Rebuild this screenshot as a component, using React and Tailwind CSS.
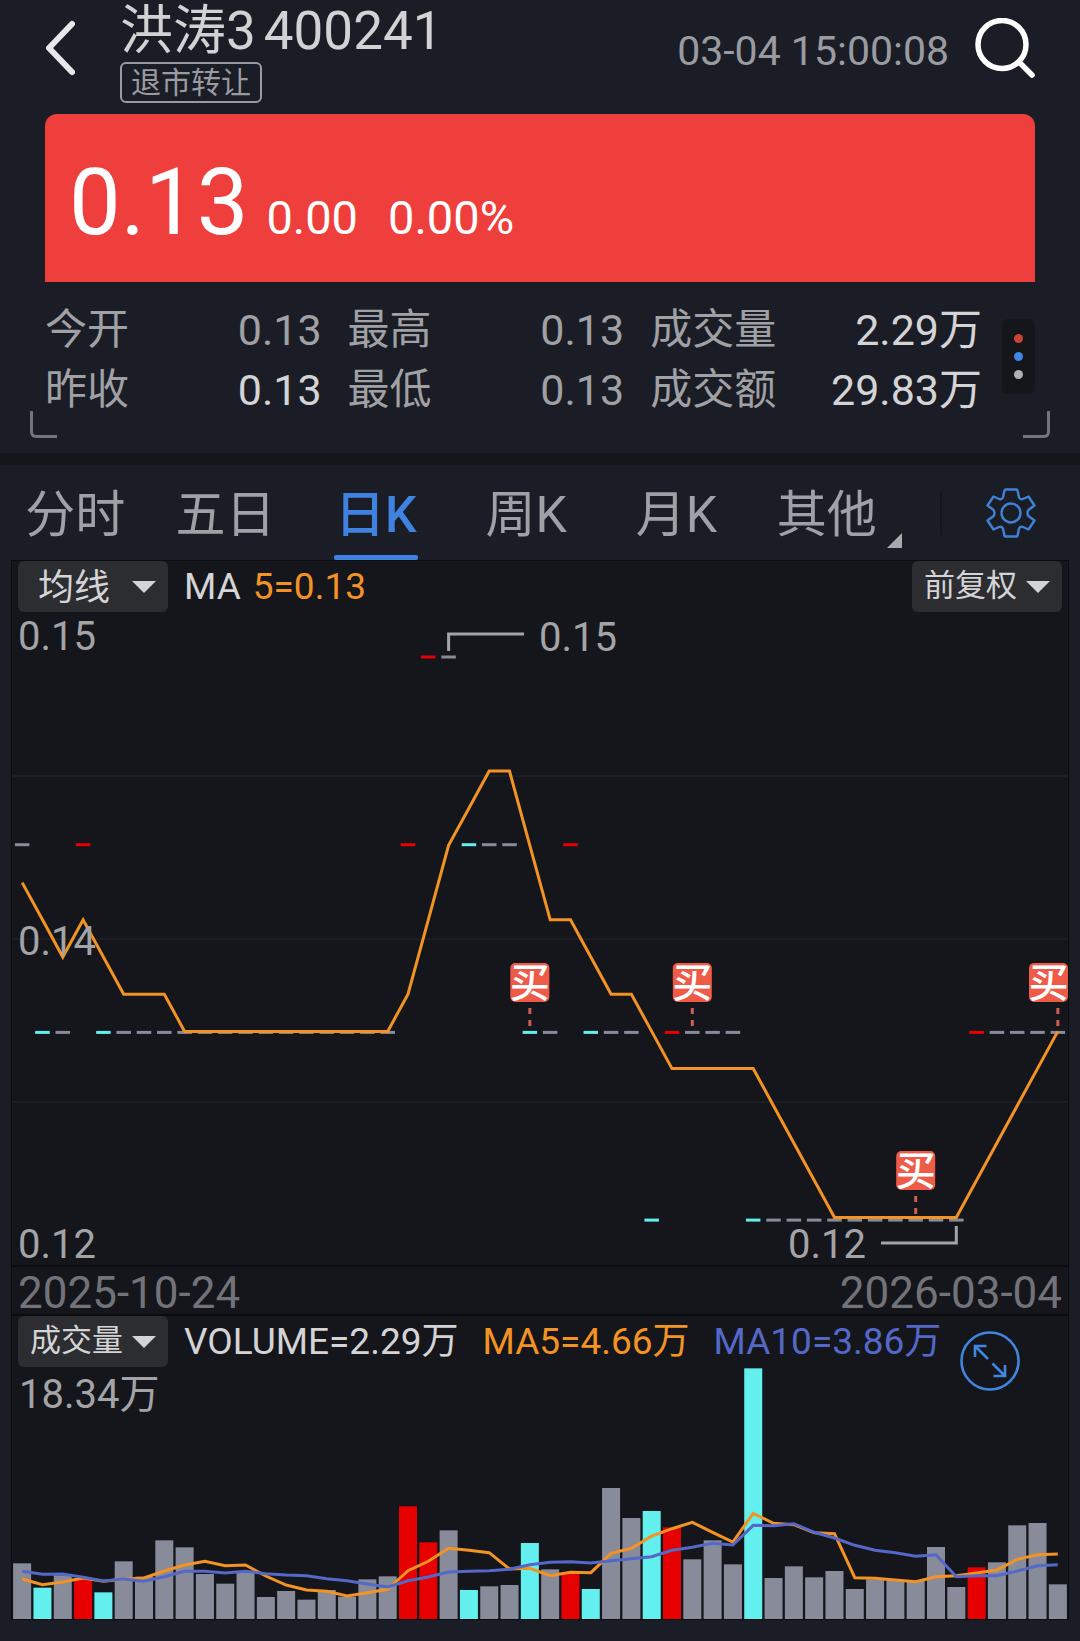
import React from 'react';

const TABS = ['分时', '五日', '日K', '周K', '月K', '其他'];

const STATS = [
    [
        { label: '今开', value: '0.13', color: 'text-[#a0a1a5]' },
        { label: '昨收', value: '0.13', color: 'text-[#d4d4d6]' },
    ],
    [
        { label: '最高', value: '0.13', color: 'text-[#a0a1a5]' },
        { label: '最低', value: '0.13', color: 'text-[#a0a1a5]' },
    ],
    [
        { label: '成交量', value: '2.29万', color: 'text-[#d4d4d6]' },
        { label: '成交额', value: '29.83万', color: 'text-[#d4d4d6]' },
    ],
];

const COLORS = { up: '#e60000', down: '#62efee', flat: '#888b99' };
const UP_DAYS = [3, 19, 20, 27, 32, 47];
const DOWN_DAYS = [1, 4, 22, 25, 28, 31, 36];

// closing prices in 1/100, the first four only feed the moving average
const PREVIOUS = [14, 14, 13, 14];
const CLOSES = [
    14, 13, 13, 14, 13, 13, 13, 13, 13, 13, 13, 13, 13, 13, 13, 13, 13, 13, 13, 14, 15, 15, 14, 14, 14, 13,
    13, 14, 13, 13, 13, 12, 13, 13, 13, 13, 12, 12, 12, 12, 12, 12, 12, 12, 12, 12, 12, 13, 13, 13, 13, 13,
];

// volume series, 752 is the tallest bar (18.34万)
const VOLUMES = [
    167, 94, 131, 121, 80, 173, 127, 236, 215, 135, 106, 140, 66, 84, 58, 87, 67, 119, 128, 338, 230, 266, 87, 98, 102, 228,
    149, 140, 90, 393, 303, 324, 275, 179, 236, 164, 752, 123, 158, 125, 144, 90, 119, 117, 115, 216, 96, 155, 170, 281, 288, 104,
];
const VOLUME_MA5 = [
    120, 103, 111, 123, 113, 119, 123, 144, 162, 173, 160, 162, 129, 102, 87, 83, 69, 79, 89, 145, 173, 212, 206, 199, 150, 152,
    130, 140, 139, 197, 212, 249, 271, 290, 260, 231, 317, 287, 283, 259, 256, 124, 122, 117, 112, 127, 130, 138, 147, 179, 193, 195,
];
const VOLUME_MA10 = [
    143, 134, 135, 125, 114, 120, 113, 127, 143, 143, 138, 143, 136, 132, 130, 121, 115, 105, 96, 115, 126, 141, 143, 145, 149, 163,
    170, 172, 168, 175, 181, 187, 206, 215, 227, 222, 281, 280, 286, 260, 243, 221, 206, 199, 188, 193, 127, 130, 130, 144, 160, 163,
];

const BUYS = [
    { day: 25, y: 351 },
    { day: 33, y: 351 },
    { day: 44, y: 539 },
    { day: 51, y: 351 },
];

const WIDTH = 1056;
const STEP = WIDTH / CLOSES.length;
const centerX = (i) => STEP * (i + 0.5);

const dayColor = (i) => {
    if (UP_DAYS.includes(i)) return COLORS.up;
    if (DOWN_DAYS.includes(i)) return COLORS.down;
    return COLORS.flat;
};

const priceY = (p) => 45 + (15 - p) * 187.7;
const averageY = (p) => 159 + (14.4 - p) * 186;

const averages = CLOSES.map((_, i) => {
    const window = [...PREVIOUS, ...CLOSES].slice(i, i + 5);
    return window.reduce((a, b) => a + b, 0) / 5;
});

const toPoints = (list, toY) => list.map((v, i) => `${centerX(i).toFixed(1)},${toY(v).toFixed(1)}`).join(' ');

const Header = () => {
    return (
        <header className="flex items-start px-[45px]">
            <button type="button" aria-label="返回" className="flex h-24 w-[75px] items-center">
                <svg className="h-14 w-[30px]" viewBox="0 0 30 56" fill="none" stroke="#e8e8ea" strokeWidth="6" strokeLinecap="round" strokeLinejoin="round">
                    <path d="M27 4L4 28l23 24" />
                </svg>
            </button>
            <div className="flex-1">
                <h1 className="flex gap-2 text-[53px] leading-[62px] text-[#d2d2d4]">
                    <span>洪涛3</span>
                    <span>400241</span>
                </h1>
                <span className="inline-block rounded-md border-2 border-[#9a9ba1] px-[9px] text-[30px] leading-[37px] text-[#9a9ba1]">退市转让</span>
            </div>
            <time className="mr-[26px] text-[41px] leading-[102px] text-[#9a9ba0]">03-04 15:00:08</time>
            <button type="button" aria-label="搜索" className="flex h-24 items-center">
                <svg className="h-[60px] w-[60px]" viewBox="0 0 60 60" fill="none" stroke="#fff" strokeWidth="5.500" strokeLinecap="round">
                    <circle cx="27" cy="26.500" r="24" />
                    <path d="M44.500 44.500L57 57" />
                </svg>
            </button>
        </header>
    );
};

const Stats = () => {
    return (
        <div className="relative flex items-center gap-5 px-[45px] pt-2.5 pb-[33px]">
            <div className="grid flex-1 grid-cols-[5fr_5fr_6fr] gap-[26px]">
                {STATS.map((column, index) => (
                    <dl key={index} className="pt-2 leading-[60px]">
                        {column.map((item) => (
                            <div key={item.label} className="flex justify-between">
                                <dt className="text-[42px] text-[#a0a1a5]">{item.label}</dt>
                                <dd className={`text-[43px] ${item.color}`}>{item.value}</dd>
                            </div>
                        ))}
                    </dl>
                ))}
            </div>
            <button type="button" aria-label="更多" className="flex h-[75px] w-[33px] flex-col items-center justify-center gap-[9px] rounded-md bg-[#15161a]">
                <span className="size-[9px] rounded-full bg-[#c94434]"></span>
                <span className="size-[9px] rounded-full bg-[#3f86e8]"></span>
                <span className="size-[9px] rounded-full bg-[#b0b0b4]"></span>
            </button>
            {/* Corner marks */}
            <span className="absolute bottom-[15px] left-[30px] size-[27px] rounded-bl-md border-b-3 border-l-3 border-[#74757a]"></span>
            <span className="absolute right-[30px] bottom-[15px] size-[27px] rounded-br-md border-r-3 border-b-3 border-[#74757a]"></span>
        </div>
    );
};

const Tabs = () => {
    return (
        <nav className="flex h-[95px] items-center">
            <div className="flex h-full flex-1">
                {TABS.map((tab) => (
                    <button
                        key={tab}
                        type="button"
                        className={`relative flex flex-1 items-center justify-center pt-1 text-[50px] leading-none ${tab === '日K' ? 'font-medium text-[#3f82e0]' : 'text-[#a0a1a6]'}`}
                    >
                        {tab}
                        {tab === '日K' && <span className="absolute bottom-0 h-[5px] w-[84px] rounded-xs bg-[#3f82e0]"></span>}
                        {tab === '其他' && (
                            <svg className="absolute right-0 bottom-3 size-4" viewBox="0 0 16 16" fill="#a8a9ad">
                                <path d="M16 1v15H1z" />
                            </svg>
                        )}
                    </button>
                ))}
            </div>
            <div className="flex w-[178px] items-center justify-end pr-11">
                <span className="mr-11 h-[45px] w-[2px] bg-[#14161b]"></span>
                <button type="button" aria-label="设置">
                    <svg className="size-[50px]" viewBox="-25 -25 50 50" fill="none" stroke="#3f82d8" strokeWidth="2.400" strokeLinejoin="round">
                        <path d="M-5.500 -23.500H5.500Q6.500 -23.500 6.700 -22L8 -15.500Q9.500 -13 12 -14L17.500 -16.500L23.500 -7.500L18 -3.500Q16.500 -2.500 16.500 0T18 3.500L23.500 7.500L17.500 16.500L12 14Q9.500 13 8 15.500L6.700 22Q6.500 23.500 5.500 23.500H-5.500Q-6.500 23.500 -6.700 22L-8 15.500Q-9.500 13 -12 14L-17.500 16.500L-23.500 7.500L-18 3.500Q-16.500 2.500 -16.500 0T-18 -3.500L-23.500 -7.500L-17.500 -16.500L-12 -14Q-9.500 -13 -8 -15.500L-6.700 -22Q-6.500 -23.500 -5.500 -23.500Z" />
                        <circle r="9.500" />
                    </svg>
                </button>
            </div>
        </nav>
    );
};

const Picker = ({ label, value, className }) => {
    return (
        <div className="relative">
            <select aria-label={label} className={`block h-[51px] w-[150px] appearance-none rounded-md bg-[#2c2d31] text-[#d4d4d6] ${className}`}>
                <option>{value}</option>
            </select>
            <svg className="pointer-events-none absolute top-5 right-3 h-3 w-6" viewBox="0 0 24 12" fill="#d4d4d6">
                <path d="M0 0h24L12 12z" />
            </svg>
        </div>
    );
};

const BuyMark = ({ day, y }) => {
    const x = centerX(day);
    const left = Math.min(x - 19.5, WIDTH - 39);
    return (
        <g>
            <rect x={left} y={y} width="39" height="39" rx="5" fill="#ee5b48" />
            <text x={left + 19.5} y={y + 34} textAnchor="middle" fontSize="40" fontWeight="500" fill="#fff">买</text>
            <path d={`M${x} ${y + 45}v20`} stroke="#cf5e50" strokeWidth="3" strokeDasharray="6 6" />
        </g>
    );
};

const PriceChart = () => {
    return (
        <svg className="block h-auto w-full overflow-visible" viewBox="0 0 1056 653" fill="none">
            {[164, 327, 490].map((y) => (
                <path key={y} d={`M0 ${y}H1056`} stroke="#212228" strokeWidth="1.500" />
            ))}
            {CLOSES.map((p, i) => (
                <rect key={i} x={centerX(i) - 7.25} y={priceY(p) - 1.5} width="14.500" height="3" fill={dayColor(i)} />
            ))}
            <polyline points={toPoints(averages, averageY)} stroke="#f39324" strokeWidth="3" />
            <path d={`M${centerX(21)} 39V22H512M${centerX(46)} 614V631H869`} stroke="#a3a4a7" strokeWidth="3" />
            <g fontSize="40" fill="#a3a4a7">
                <text x="6" y="38">0.15</text>
                <text x="6" y="343">0.14</text>
                <text x="6" y="646">0.12</text>
                <text x="527" y="39">0.15</text>
                <text x="776" y="646">0.12</text>
            </g>
            {BUYS.map((buy) => (
                <BuyMark key={buy.day} {...buy} />
            ))}
        </svg>
    );
};

const VolumeChart = () => {
    const toY = (v) => 252 - v / 3;
    return (
        <svg className="block h-auto w-full overflow-visible" viewBox="0 0 1056 252" fill="none">
            {VOLUMES.map((v, i) => (
                <rect key={i} x={centerX(i) - 9} y={toY(v)} width="18" height={v / 3} fill={dayColor(i)} />
            ))}
            <polyline points={toPoints(VOLUME_MA5, toY)} stroke="#f39324" strokeWidth="3" />
            <polyline points={toPoints(VOLUME_MA10, toY)} stroke="#5468c8" strokeWidth="3" />
            <text x="7" y="41" fontSize="40" fill="#a3a4a7">18.34万</text>
        </svg>
    );
};

const App = () => {
    return (
        <div lang="zh-CN" className="min-h-screen bg-[#1b1d26] pb-[22px] font-[family-name:Roboto,'Noto_Sans_CJK_SC',sans-serif]">
            <Header />

            <section className="mx-[45px] mt-[11px] flex h-[168px] items-baseline rounded-t-xl bg-[#ef3f3d] px-6 pt-8 text-white">
                <strong className="text-[92px] leading-[114px] font-normal">0.13</strong>
                <span className="ml-[18px] text-[47px]">0.00</span>
                <span className="ml-[30px] text-[47px]">0.00%</span>
            </section>

            <Stats />
            <div className="h-3 bg-[#15161a]"></div>
            <Tabs />

            <main className="mx-[11px] border border-[#0b0c0f] bg-[#15161b]">
                <div className="flex items-start px-1.5">
                    <Picker label="主图指标" value="均线" className="pl-5 text-[36px]" />
                    <p className="ml-4 flex flex-1 gap-3 text-[37px] leading-[51px] text-[#d4d4d6]">
                        <span>MA</span>
                        <span className="text-[#f39324]">5=0.13</span>
                    </p>
                    <Picker label="复权方式" value="前复权" className="pl-3 text-[31px]" />
                </div>
                <PriceChart />

                <div className="flex justify-between border-y-2 border-[#0b0c0f] px-1.5 pt-[5px] text-[44px] leading-[42px] text-[#727378]">
                    <time>2025-10-24</time>
                    <time>2026-03-04</time>
                </div>

                <section className="relative">
                    <div className="flex items-start pl-1.5">
                        <Picker label="副图指标" value="成交量" className="pl-3 text-[31px]" />
                        <p className="ml-4 flex gap-6 text-[37px] leading-[51px]">
                            <span className="text-[#d4d4d6]">VOLUME=2.29万</span>
                            <span className="text-[#f39324]">MA5=4.66万</span>
                            <span className="text-[#5468c8]">MA10=3.86万</span>
                        </p>
                    </div>
                    <VolumeChart />
                    <button type="button" aria-label="全屏" className="absolute top-[15px] right-12">
                        <svg className="size-[60px]" viewBox="-30 -30 60 60" fill="none" stroke="#3f86e0" strokeWidth="2.600">
                            <circle r="28.500" />
                            <path d="M-2 -2L-15 -15M-3.500 -15H-15V-4M2.500 2.500L15 15M15 4V15H3.500" />
                        </svg>
                    </button>
                </section>
            </main>
        </div>
    );
};

export default App;
